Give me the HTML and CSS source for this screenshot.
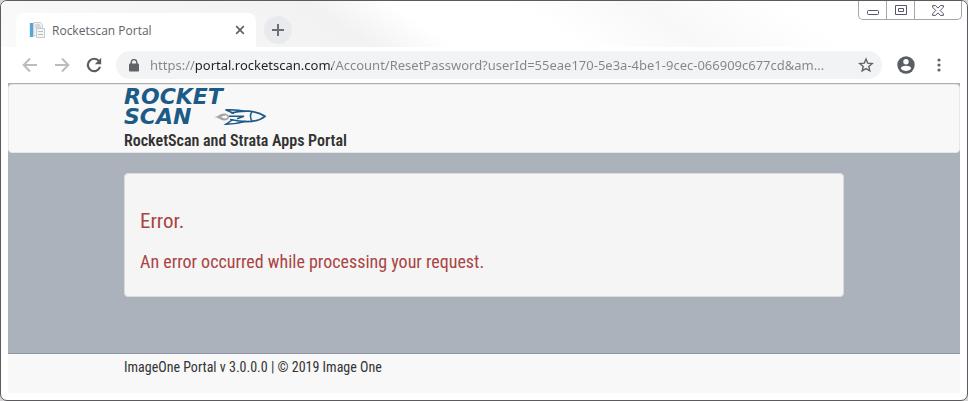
FILE: index.html
```html
<!DOCTYPE html>
<html lang="en">
<head>
  <meta charset="UTF-8" />
  <title>Rocketscan Portal</title>
  <meta name="viewport" content="width=device-width, initial-scale=1.0"/>
  <link rel="stylesheet" href="styles.css">
</head>
<body>
  <div class="window">
    <div class="titlebar">
      <div class="tab">
        <svg class="favicon" width="16" height="16" viewBox="0 0 16 16">
          <path d="M0.5 1h5v14h-5z" fill="#c9e3f4"/>
          <path d="M1 1h3v14H1z" fill="#56a5d6"/>
          <path d="M4.5.5h7l2 2v11h-9z" fill="#eef1f4" stroke="#ccd2d8"/>
          <path d="M6 3h5M6 5h6" stroke="#b8c0c8"/>
          <path d="M7.5 6.5h8v9h-8z" fill="#f3f5f7" stroke="#c3cad0"/>
          <path d="M9 9.5h5M9 12.5h5" stroke="#b4bcc4"/>
        </svg>
        <span class="tab-title">Rocketscan Portal</span>
        <button class="icon-btn" type="button" aria-label="Close tab">
          <svg width="10" height="10" viewBox="0 0 10 10"><path d="M1.2 1.2l7.6 7.6M8.8 1.2L1.2 8.8" stroke="#5f6368" stroke-width="1.7"/></svg>
        </button>
      </div>
      <button class="new-tab" type="button" aria-label="New tab">
        <svg width="12" height="12" viewBox="0 0 12 12"><path d="M6 0v12M0 6h12" stroke="#6b6f74" stroke-width="2"/></svg>
      </button>
      <div class="window-controls">
        <button type="button" aria-label="Minimize">
          <svg width="12" height="14" viewBox="0 0 12 14"><rect x=".5" y="7.5" width="11" height="4" rx="1" fill="#fff" stroke="#55566a"/></svg>
        </button>
        <button type="button" aria-label="Maximize">
          <svg width="12" height="10" viewBox="0 0 12 10"><path d="M.5.5h11v9H.5zM3.5 3.5h5v3h-5z" fill="#fff" stroke="#55566a"/></svg>
        </button>
        <button class="window-close" type="button" aria-label="Close">
          <svg width="12" height="11" viewBox="0 0 12 11"><path d="M.6.6h3L6 3.1 8.4.6h3v1.6L8.2 5.5l3.2 3.3v1.6h-3L6 7.9l-2.4 2.5h-3V8.8l3.2-3.3L.6 2.2z" fill="#fff" stroke="#55566a"/></svg>
        </button>
      </div>
    </div>

    <div class="toolbar">
      <button class="icon-btn" type="button" aria-label="Back">
        <svg width="16" height="16" viewBox="0 0 16 16"><path d="M15 8H2M8 1.5L1.7 8 8 14.5" fill="none" stroke="#babcbe" stroke-width="2"/></svg>
      </button>
      <button class="icon-btn" type="button" aria-label="Forward">
        <svg width="16" height="16" viewBox="0 0 16 16"><path d="M1 8h13M8 1.5L14.3 8 8 14.5" fill="none" stroke="#babcbe" stroke-width="2"/></svg>
      </button>
      <button class="icon-btn" type="button" aria-label="Reload">
        <svg width="16" height="16" viewBox="0 0 16 16"><path d="M13 4.2A6.2 6.2 0 1 0 14 9.8" fill="none" stroke="#5a5e63" stroke-width="2.2"/><path d="M15.2.8v6.4H8.8z" fill="#5a5e63"/></svg>
      </button>
      <div class="address">
        <svg width="10" height="13" viewBox="0 0 10 13"><rect y="4.5" width="10" height="8" rx="1" fill="#5f6368"/><path d="M2.2 5V3.4a2.8 2.8 0 0 1 5.6 0V5" fill="none" stroke="#5f6368" stroke-width="1.4"/></svg>
        <input class="url" type="text" aria-label="Address" value="https://portal.rocketscan.com/Account/ResetPassword?userId=55eae170-5e3a-4be1-9cec-066909c677cd&amp;am..." />
        <button class="icon-btn" type="button" aria-label="Bookmark this page">
          <svg width="16" height="16" viewBox="0 0 16 16"><path d="M8 2l1.7 4.2 4.5.4-3.4 2.9 1 4.4L8 11.6l-3.8 2.3 1-4.4-3.4-2.9 4.5-.4z" fill="none" stroke="#5f6368" stroke-width="1.4"/></svg>
        </button>
      </div>
      <button class="icon-btn" type="button" aria-label="Profile">
        <svg width="18" height="18" viewBox="0 0 18 18"><circle cx="9" cy="9" r="8.7" fill="#5a5e63"/><circle cx="9" cy="5.8" r="2.7" fill="#fff"/><path d="M3.8 12.2C4.2 10.5 7 9.8 9 9.8s4.8.7 5.2 2.4a6.2 6.2 0 0 1-10.4 0z" fill="#fff"/></svg>
      </button>
      <button class="icon-btn" type="button" aria-label="Menu">
        <svg width="16" height="16" viewBox="0 0 16 16" fill="#5f6368"><circle cx="8" cy="3" r="1.6"/><circle cx="8" cy="8" r="1.6"/><circle cx="8" cy="13" r="1.6"/></svg>
      </button>
    </div>

    <div class="page">
      <header class="navbar">
        <div class="container">
          <a class="logo" href="/">
            <span>ROCKET</span>
            <span class="logo-row">SCAN
              <svg width="52" height="16" viewBox="0 0 52 16" fill="none">
                <path d="M0 8c4 0 6-3.5 10-3.5 3 0 5 1.5 5 3.5s-2 3.5-5 3.5C7 11.5 5 8.5 0 8z" fill="#a3a3a3"/>
                <path d="M6 8c2 0 3-1.5 5-1.5s2.5.7 2.5 1.5-1 1.5-2.5 1.5S8 8 6 8z" fill="#f8f8f8"/>
                <path d="M17 4C28 1 42 1 51 7.3 43 14 30 13.5 16 10.5" stroke="#1c5a88" stroke-width="1.7"/>
                <path d="M20 4.5L11.5.8C18 .6 25 .8 31 2.5M19 10.5L12 15.2c7-.2 14-1.2 20-3" stroke="#1c5a88" stroke-width="1.5"/>
                <path d="M15 7.3h15l-7 2.4M38 3c-2 2-2 6 0 9" stroke="#1c5a88" stroke-width="1.5"/>
              </svg>
            </span>
          </a>
          <p class="tagline">RocketScan and Strata Apps Portal</p>
        </div>
      </header>

      <main class="container">
        <div class="well">
          <h1>Error.</h1>
          <h2>An error occurred while processing your request.</h2>
        </div>
      </main>

      <footer class="footer">
        <div class="container">ImageOne Portal v 3.0.0.0 | © 2019 Image One</div>
      </footer>
    </div>
  </div>
</body>
</html>
```
FILE: styles.css
```css
* {
  box-sizing: border-box;
}

body {
  margin: 0;
  background: #d4d4d4;
  font-family: "Open Sans", sans-serif;
}

button {
  background: none;
  border: 0;
  padding: 0;
  cursor: pointer;
}

svg {
  display: block;
  flex: none;
}

.window {
  display: flex;
  flex-direction: column;
  min-height: 100vh;
  border: 1px solid #5c5a5d;
  border-radius: 7px;
  background: #fff;
  padding: 0 7px 7px;
}

/* browser chrome */
.titlebar {
  display: flex;
  align-items: flex-end;
  height: 46px;
  margin: 0 -7px;
  padding: 0 5px 0 15px;
  border-radius: 6px 6px 0 0;
  background: linear-gradient(35deg, #fafafa 0%, #f2f2f2 36%, #fff 44%, #fff 56%, #f8f8f8 68%, #fff 82%);
}

.tab {
  display: flex;
  align-items: center;
  width: 240px;
  height: 34px;
  padding: 0 11px 0 13px;
  border-radius: 8px 8px 0 0;
  background: #fff;
}

.tab-title {
  flex: 1;
  margin-left: 7px;
  color: #5f6368;
  font-size: 12px;
}

.icon-btn {
  flex: none;
}

.new-tab {
  display: flex;
  align-items: center;
  justify-content: center;
  width: 28px;
  height: 28px;
  margin: 0 0 3px 8px;
  border-radius: 50%;
  background: #e8eaed;
}

.window-controls {
  display: flex;
  align-self: flex-start;
  height: 19px;
  margin-left: auto;
  border: 1px solid #a6a6a6;
  border-top: 0;
  border-radius: 0 0 5px 5px;
}

.window-controls button {
  display: flex;
  align-items: center;
  justify-content: center;
  width: 28px;
  border-right: 1px solid #a6a6a6;
}

.window-controls .window-close {
  width: 46px;
  border-right: 0;
}

.toolbar {
  display: flex;
  align-items: center;
  gap: 16px;
  height: 36px;
  padding: 0 13px 0 14px;
}

.address {
  display: flex;
  flex: 1;
  align-items: center;
  height: 28px;
  margin: 0 -1px 0 -2px;
  padding: 0 8px 0 13px;
  border-radius: 14px;
  background: #f1f3f4;
}

/* the host name is darker than the rest of the address */
.url {
  flex: 1;
  min-width: 0;
  margin: 0 8px 0 11px;
  border: 0;
  padding: 0;
  outline: 0;
  color: transparent;
  background: linear-gradient(to right, #80868b 45px, #202124 45px, #202124 182px, #80868b 182px);
  background-clip: text;
  -webkit-background-clip: text;
  font-family: "Noto Sans", sans-serif;
  font-size: 13px;
}

/* page */
.page {
  display: flex;
  flex: 1;
  flex-direction: column;
  border-top: 1px solid #adadad;
  background: #acb2bc;
  color: #333;
  font-family: "Roboto Condensed", "Liberation Sans Narrow", sans-serif;
}

.container {
  width: 100%;
  max-width: 720px;
  margin: 0 auto;
}

.navbar {
  margin-bottom: 20px;
  border: 1px solid #e7e7e7;
  border-radius: 4px;
  background: #f8f8f8;
}

.logo {
  display: block;
  width: 142px;
  padding-top: 2px;
  color: #1c5a88;
  font: italic bold 22px/20px "DejaVu Sans", sans-serif;
  text-decoration: none;
}

.logo span {
  display: block;
}

.logo .logo-row {
  display: flex;
  align-items: center;
  justify-content: space-between;
}

.tagline {
  margin: 4px 0 1px;
  font-size: 16px;
  font-weight: 600;
  line-height: 20px;
}

.well {
  padding: 35px 15px 19px;
  border: 1px solid #dcdcdc;
  border-radius: 4px;
  background: #f5f5f5;
  color: #a94442;
}

.well h1,
.well h2 {
  margin: 0;
  font-weight: normal;
}

.well h1 {
  margin-bottom: 17px;
  font-size: 21px;
  line-height: 24px;
}

.well h2 {
  padding-bottom: 3px;
  font-size: 18px;
  line-height: 24px;
}

.footer {
  height: 40px;
  margin-top: auto;
  border-top: 1px solid #8c96a8;
  background: #f8f8f8;
  font-size: 14px;
  line-height: 26px;
}
```
